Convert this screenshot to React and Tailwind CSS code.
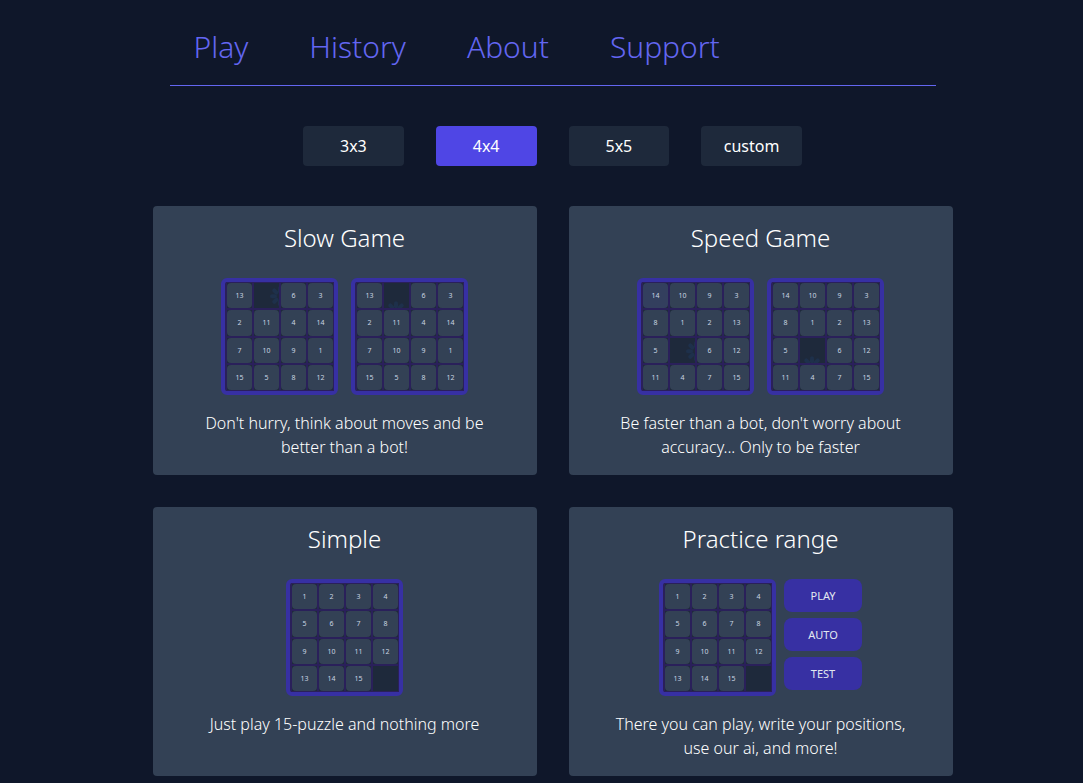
import React from 'react'

const navLinks = ['Play', 'History', 'About', 'Support']
const sizes = ['3x3', '4x4', '5x5', 'custom']
const actions = ['PLAY', 'AUTO', 'TEST']

const slow = [13, 0, 6, 3, 2, 11, 4, 14, 7, 10, 9, 1, 15, 5, 8, 12]
const speed = [14, 10, 9, 3, 8, 1, 2, 13, 5, 0, 6, 12, 11, 4, 7, 15]
const solved = [1, 2, 3, 4, 5, 6, 7, 8, 9, 10, 11, 12, 13, 14, 15, 0]

// burst of petals peeking out from under the neighbouring tile
const Splash = ({ side }) => (
  <svg
    viewBox="0 0 25 25"
    className="block w-full h-full"
    stroke="#1e304b"
    strokeWidth="4"
    strokeLinecap="round"
  >
    <g transform={side === 'right' ? 'translate(26 13)' : 'translate(12 28)'}>
      {[0, 45, 90, 135, 180, 225, 270, 315].map((a) => (
        <line key={a} x1="5" x2="8" transform={`rotate(${a})`} />
      ))}
    </g>
  </svg>
)

const Board = ({ tiles, splash, active }) => (
  <div className="grid grid-cols-4 grid-rows-4 w-[117px] h-[117px] pl-px border-4 border-[#3730a3] rounded-md bg-[#2a205a]">
    {tiles.map((n) => (
      <div
        key={n}
        className="min-h-0 border border-[#2a205a] bg-[#1e293b] overflow-hidden"
      >
        {n > 0 ? (
          <div
            className={`flex items-center justify-center w-full h-full rounded-[4px] text-[7px] leading-none text-slate-300 ${
              n === active ? 'bg-[#333f5e]' : 'bg-[#334155]'
            }`}
          >
            {n}
          </div>
        ) : (
          splash && <Splash side={splash} />
        )}
      </div>
    ))}
  </div>
)

const Card = ({ title, text, children }) => (
  <section className="flex flex-col items-center p-4 rounded bg-[#334155] text-center text-white">
    <h2 className="text-2xl font-light">{title}</h2>
    {children}
    <p className="mt-4 px-7 text-base font-light">{text}</p>
  </section>
)

const App = () => {
  return (
    <div className="min-h-screen pl-[22px] bg-[#0f172a] font-['Noto_Sans',sans-serif]">
      <div className="max-w-[800px] mx-auto">
        <nav className="flex gap-[61px] mx-[17px] h-[86px] px-6 pt-[29px] border-b border-[#6366f1]">
          {navLinks.map((l) => (
            <a key={l} href="#" className="text-3xl font-light text-[#6366f1]">
              {l}
            </a>
          ))}
        </nav>
        <div className="grid grid-cols-4 gap-8 max-w-[499px] mx-auto mt-10">
          {sizes.map((s) => (
            <button
              key={s}
              className={`h-10 rounded text-white ${
                s === '4x4' ? 'bg-[#4f46e5]' : 'bg-[#1e293b]'
              }`}
            >
              {s}
            </button>
          ))}
        </div>
        <div className="grid grid-cols-2 gap-8 mt-10">
          <Card
            title="Slow Game"
            text="Don't hurry, think about moves and be better than a bot!"
          >
            <div className="flex gap-[13px] mt-6">
              <Board tiles={slow} splash="right" />
              <Board tiles={slow} splash="bottom" />
            </div>
          </Card>
          <Card
            title="Speed Game"
            text="Be faster than a bot, don't worry about accuracy... Only to be faster"
          >
            <div className="flex gap-[13px] mt-6">
              <Board tiles={speed} splash="right" active={14} />
              <Board tiles={speed} splash="bottom" />
            </div>
          </Card>
          <Card title="Simple" text="Just play 15-puzzle and nothing more">
            <div className="mt-6">
              <Board tiles={solved} />
            </div>
          </Card>
          <Card
            title="Practice range"
            text="There you can play, write your positions, use our ai, and more!"
          >
            <div className="flex gap-2 mt-6">
              <Board tiles={solved} />
              <div className="flex flex-col gap-1.5 w-[78px]">
                {actions.map((a) => (
                  <button
                    key={a}
                    className="h-[33px] pt-px rounded-lg bg-[#3730a3] text-[11px] text-slate-200"
                  >
                    {a}
                  </button>
                ))}
              </div>
            </div>
          </Card>
        </div>
      </div>
    </div>
  )
}

export default App
